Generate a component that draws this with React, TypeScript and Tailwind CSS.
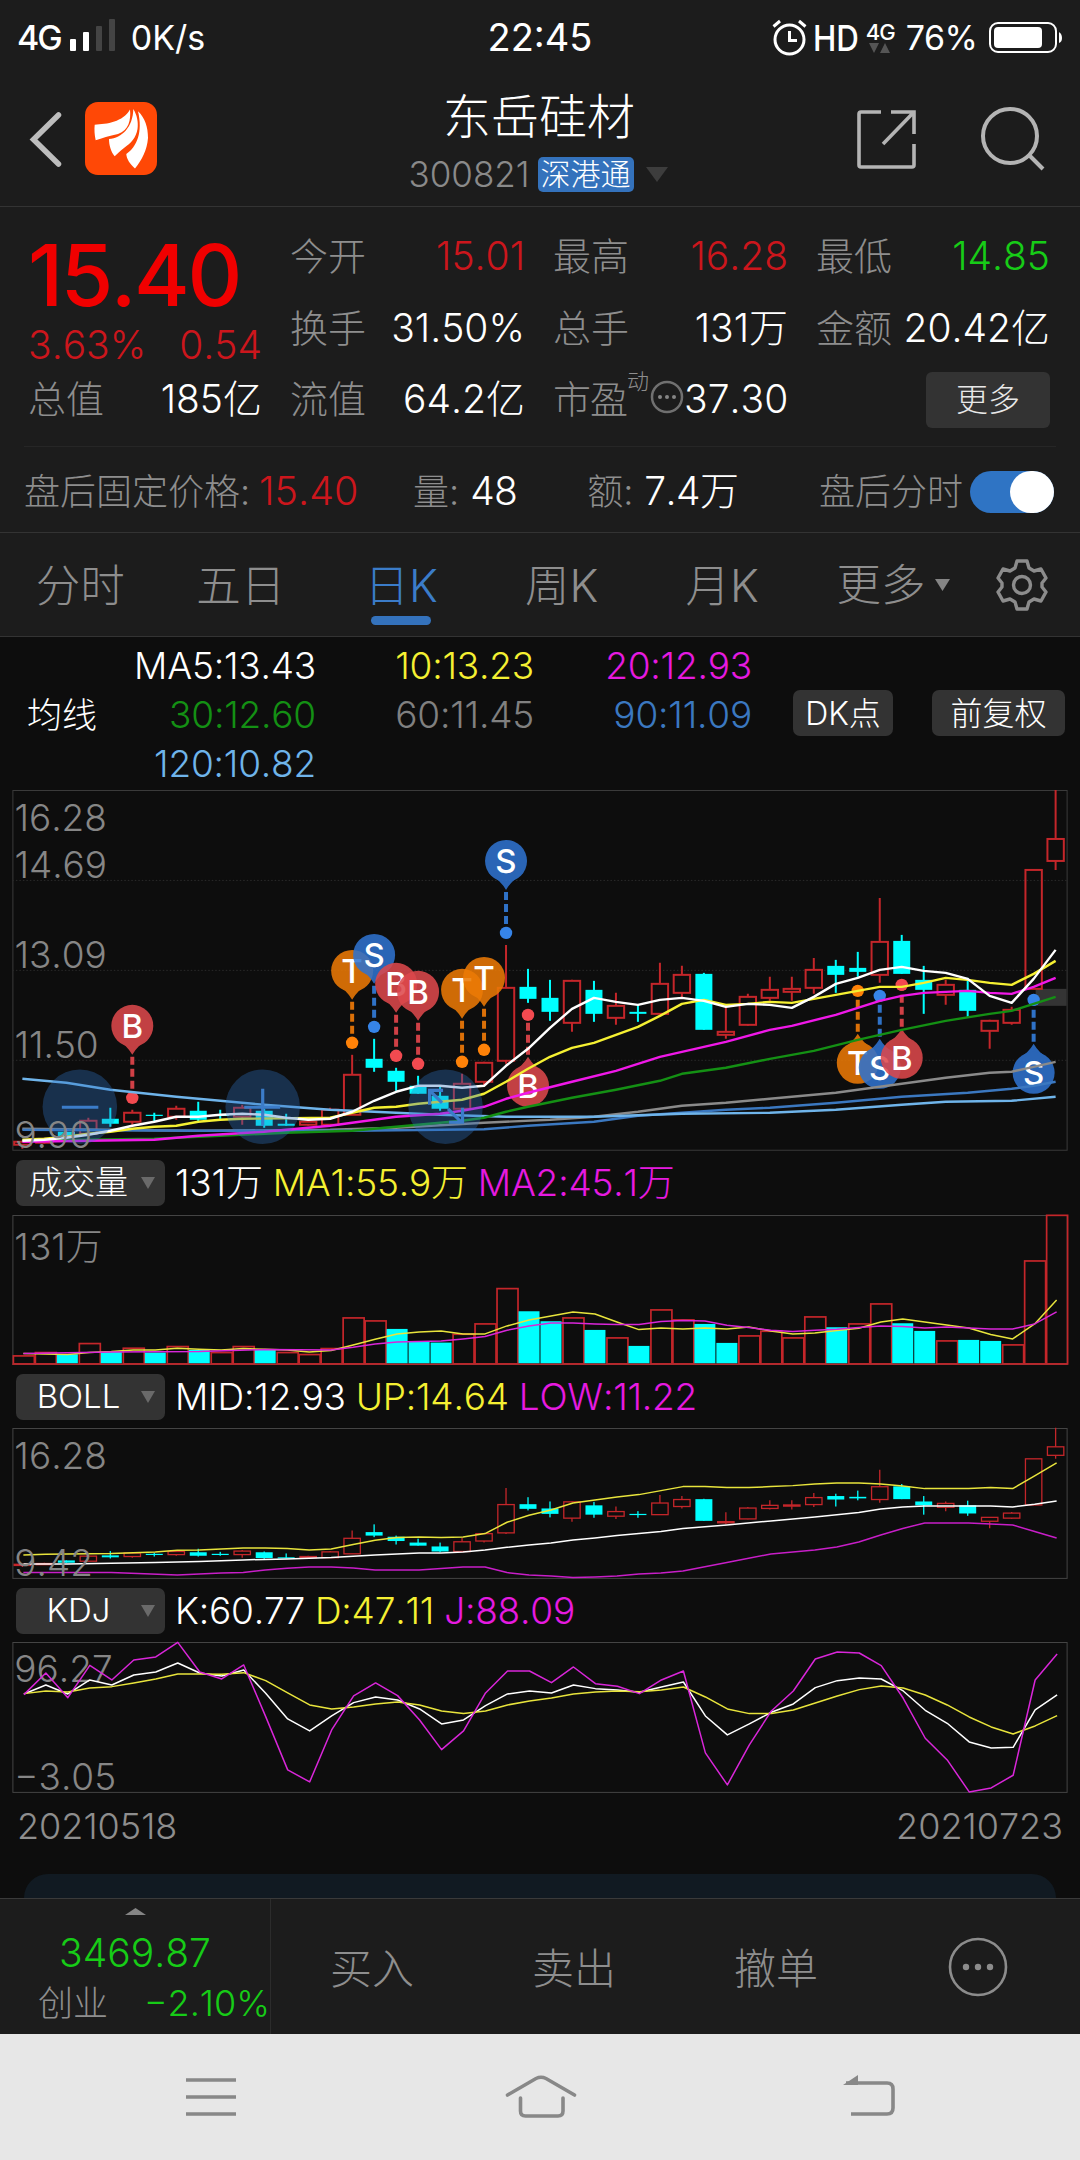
import React from 'react';

type Candle = [up: 0 | 1, high: number, top: number, bottom: number, low: number];

const STEP = 22;

const candles: Candle[] = [
  [1, 1141, 1142, 1145, 1149],
  [1, 1138, 1140, 1143, 1144],
  [0, 1132, 1132, 1138, 1138],
  [1, 1118, 1121, 1134, 1135],
  [0, 1108, 1119, 1124, 1127],
  [1, 1110, 1113, 1122, 1125],
  [0, 1113, 1115, 1116, 1122],
  [1, 1106, 1109, 1117, 1120],
  [0, 1102, 1111, 1120, 1122],
  [0, 1110, 1115, 1116, 1120],
  [1, 1105, 1108, 1117, 1125],
  [0, 1109, 1111, 1126, 1128],
  [0, 1114, 1124, 1126, 1126],
  [1, 1120, 1122, 1125, 1126],
  [1, 1108, 1110, 1125, 1126],
  [1, 1055, 1075, 1115, 1115],
  [0, 1039, 1059, 1068, 1072],
  [0, 1068, 1071, 1082, 1091],
  [0, 1076, 1086, 1094, 1094],
  [0, 1086, 1096, 1109, 1111],
  [1, 1074, 1084, 1109, 1110],
  [1, 1062, 1063, 1082, 1086],
  [1, 945, 988, 1061, 1064],
  [0, 969, 987, 999, 1003],
  [0, 980, 998, 1012, 1021],
  [1, 980, 981, 1023, 1032],
  [0, 981, 990, 1014, 1022],
  [1, 993, 1006, 1018, 1025],
  [0, 1005, 1012, 1014, 1022],
  [1, 963, 984, 1014, 1015],
  [1, 966, 975, 993, 998],
  [0, 973, 974, 1030, 1030],
  [1, 1008, 1032, 1035, 1039],
  [1, 994, 997, 1025, 1026],
  [1, 977, 990, 998, 1001],
  [1, 977, 989, 992, 1001],
  [1, 958, 970, 988, 994],
  [0, 960, 966, 975, 993],
  [0, 952, 968, 972, 977],
  [1, 898, 942, 975, 983],
  [0, 935, 941, 974, 974],
  [0, 966, 980, 990, 1014],
  [1, 980, 985, 995, 1005],
  [0, 978, 990, 1011, 1017],
  [1, 1020, 1021, 1031, 1049],
  [1, 1007, 1010, 1023, 1025],
  [1, 870, 870, 989, 989],
  [1, 790, 839, 861, 870],
];

const averages = [
  { color: '#8a8a8a', points: '0,1129 8,1131 14,1130 17,1128 21,1123 24,1120 26,1117 28,1112 30,1106 32,1103 34,1099 37,1093 40,1084 42,1078 44,1073 45,1072 46,1067 47,1062' },
  { color: '#3b78c0', points: '0,1130 8,1131 15,1131 21,1129.5 23,1126 26,1122 28,1116 30,1113 32,1110 34,1108 37,1103 40,1097 43,1093 45,1089 46,1086 47,1082' },
  { color: '#6fb4ea', points: '0,1079 2,1083 4,1090 7,1097 11,1105 14,1110 15,1111 19,1115 22,1117 26,1117 30,1114 34,1113 37,1110 40,1105 42,1102 45,1101 47,1097' },
  { color: '#149014', points: '0,1141 3,1140 6,1139 9,1136 12,1133 15,1131 18,1125 20,1121 21,1118 22,1112 23,1107 25,1098 27,1090 29,1081 30,1074 32,1068 34,1059 36,1051 38,1040 40,1030 42,1021 44,1014 45,1011 46,1004 47,997' },
  { color: '#f018e8', points: '0,1142 3,1141 6,1140 8,1136 11,1132 13,1128 14,1126 15,1123 17,1117 19,1114 20,1111 21,1107 22,1099 23,1093 25,1082 27,1071 29,1057 31,1047 32,1042 34,1030 35,1026 37,1015 39,1001 40,996 41,993 42,992 43,991 44,993 45,994 46,987 47,978' },
  { color: '#f5f032', points: '0,1140 1,1139 2,1137 3,1134 4,1132 5,1129 6,1127 7,1126 8,1122 9,1120 10,1119 14,1118 15,1113 16,1108 17,1107 18,1104 19,1102 20,1100 21,1094 22,1082 23,1069 24,1057 25,1048 26,1043 27,1035 28,1027 29,1016 30,1004 31,1000 32,1005 33,1004 34,1002 35,1003 36,999 37,995 38,991 39,987 40,987 41,983 42,978 43,980 44,983 45,985 46,974 47,961' },
  { color: '#ffffff', points: '0,1141 1,1140 2,1138 3,1135 4,1131 5,1126 6,1122 7,1117 8,1117 9,1115 10,1114 11,1115 12,1118 13,1120 14,1119 15,1112 16,1101 17,1092 18,1086 19,1086 20,1088 21,1086 22,1066 23,1049 24,1028 25,1009 26,998 27,1002 28,1005 29,1000 30,998 31,1001 32,1007 33,1004 34,1005 35,1008 36,997 37,984 38,978 39,970 40,967 41,971 42,973 43,979 44,996 45,1003 46,979 47,950' },
];

const pinColors = { B: '#f24a50', S: '#3684e8', T: '#ff8208' };
const pinFills = { B: '#dd484c', S: '#2f73d0', T: '#ec7a05' };

const pins: { x: number; label: 'B' | 'S' | 'T'; y: number; dot: number }[] = [
  { x: 132, label: 'B', y: 1026, dot: 1098 },
  { x: 352, label: 'T', y: 971, dot: 1043 },
  { x: 374, label: 'S', y: 955, dot: 1027 },
  { x: 396, label: 'B', y: 984, dot: 1056 },
  { x: 418, label: 'B', y: 992, dot: 1064 },
  { x: 462, label: 'T', y: 990, dot: 1062 },
  { x: 484, label: 'T', y: 978, dot: 1050 },
  { x: 506, label: 'S', y: 861, dot: 933 },
  { x: 528, label: 'B', y: 1086, dot: 1015 },
  { x: 858, label: 'T', y: 1063, dot: 991 },
  { x: 880, label: 'S', y: 1068, dot: 996 },
  { x: 902, label: 'B', y: 1058, dot: 985 },
  { x: 1034, label: 'S', y: 1073, dot: 1000 },
];

// bar tops in thirds of a pixel, 'c' marks a falling day
const volumes =
  '615 605 610c 578 603c 592 605c 587 597c 605 587 597c 605 611 593 501 510 534c 573c 575c 550 519 413 481c 511c 501 537c 561 585c 477 507 519c 576c 555 541 561 498 529c 519 459 517c 540c 570 567c 570c 582 330 193'.split(' ');

const volumeLines = [
  { color: '#e8e43c', points: '0,608 1,609 2,611 3,605 4,602 5,597 6,597 7,592 8,595 9,597 10,593 11,595 12,597 13,603 14,599 15,582 16,565 17,549 18,543 19,540 20,549 21,549 22,525 23,507 24,495 25,483 26,489 27,513 28,536 29,531 30,534 31,531 32,534 33,528 34,540 35,549 36,546 37,539 38,532 39,513 40,504 41,513 42,522 43,531 44,551 45,564 46,519 47,447' },
  { color: '#d926d9', points: '0,608 4,603 8,602 11,596 14,597 15,589 16,579 17,573 18,572 19,570 20,564 21,557 22,538 23,525 24,516 25,516 26,519 27,521 28,521 29,512 30,509 31,510 32,523 33,530 34,538 35,542 36,538 37,535 38,530 39,525 40,527 41,531 42,528 43,531 44,534 45,534 46,519 47,483' },
];

const bollLines = [
  { color: '#e8e43c', points: '0,555 1,553 4,551 6,546 7,541 8,540 9,537 10,534 11,534 12,536 13,540 14,537 15,524 16,511 17,503 18,501 19,503 20,501 21,491 22,457 23,436 24,420 25,399 26,390 27,381 28,374 29,362 30,350 31,350 32,353 33,353 34,350 35,347 36,342 37,339 38,339 39,342 40,348 41,356 43,356 44,353 45,356 46,318 47,279' },
  { color: '#ffffff', points: '0,582 2,582 6,578 8,575 10,570 12,567 14,563 15,559 16,555 18,549 19,549 20,546 21,540 22,532 23,525 24,519 25,510 26,504 27,497 28,491 29,485 30,476 32,465 34,453 36,441 38,428 39,417 40,411 41,408 44,408 45,411 46,403 47,393' },
  { color: '#c81ec8', points: '0,608 4,608 7,615 9,609 10,608 11,600 12,595 13,591 14,591 15,594 16,600 18,600 20,591 21,591 22,608 23,615 24,618 25,623 26,621 27,618 28,612 29,609 30,603 32,578 34,552 36,540 37,531 38,516 39,495 40,476 41,459 43,459 45,465 46,485 47,504' },
];

const kdjLines = [
  { color: '#ffffff', points: '0,327 1,300 2,327 3,285 4,300 5,270 6,261 7,234 8,264 9,273 10,255 11,325 12,402 13,438 14,393 15,353 16,336 17,345 18,372 19,417 20,405 21,362 22,327 23,318 24,324 25,300 26,311 27,315 28,322 29,306 30,291 31,393 32,450 33,417 34,382 35,357 36,308 37,287 38,279 39,282 40,318 41,376 42,415 43,471 44,489 45,487 46,375 47,330' },
  { color: '#e8e43c', points: '0,326 1,318 2,321 3,309 4,305 5,294 6,282 7,267 8,267 9,268 10,263 11,287 12,324 13,360 14,372 15,366 16,357 17,351 18,360 19,378 20,386 21,378 22,360 23,348 24,339 25,327 26,321 27,318 28,320 29,315 30,306 31,336 32,372 33,386 34,386 35,375 36,354 37,333 38,314 39,303 40,309 41,330 42,360 43,396 44,426 45,447 46,423 47,392' },
  { color: '#d926d9', points: '0,329 1,264 2,338 3,241 4,285 5,225 6,216 7,172 8,261 9,282 10,240 11,395 12,555 13,591 14,435 15,333 16,294 17,332 18,405 19,494 20,438 21,324 22,258 23,258 24,293 25,246 26,296 27,304 28,326 29,285 30,258 31,504 32,600 33,480 34,378 35,318 36,222 37,201 38,204 39,242 40,340 41,460 42,525 43,621 44,609 45,571 46,285 47,207' },
];

function Lines({
  series,
  width,
  scaleY,
  offsetX = 22,
}: {
  series: { color: string; points: string }[];
  width: number;
  scaleY: number;
  offsetX?: number;
}) {
  return (
    <g transform={`translate(${offsetX} 0) scale(${STEP} ${scaleY})`}>
      {series.map((s) => (
        <polyline
          key={s.color}
          points={s.points}
          fill="none"
          stroke={s.color}
          strokeWidth={width}
          strokeLinejoin="round"
          vectorEffect="non-scaling-stroke"
        />
      ))}
    </g>
  );
}

function Candles({ mapY, stroke }: { mapY: (y: number) => number; stroke: number }) {
  return (
    <>
      {candles.map(([up, high, top, bottom, low], i) => {
        const x = 22 + i * STEP;
        const [h, t, b, l] = [high, top, bottom, low].map(mapY);
        if (!up) {
          return (
            <g key={i} fill="#00ffff">
              <rect x={x - stroke / 2} y={h} width={stroke} height={l - h} />
              <rect x={x - 8.5} y={t} width={17} height={Math.max(b - t, 1.2)} />
            </g>
          );
        }
        return (
          <g key={i} fill="none" stroke="#c4262a" strokeWidth={stroke}>
            <path d={`M${x} ${h}V${t}M${x} ${b}V${l}`} />
            <rect x={x - 8.2} y={t} width={16.4} height={Math.max(b - t, 1)} />
          </g>
        );
      })}
    </>
  );
}

function Pin({ x, label, y, dot }: { x: number; label: 'B' | 'S' | 'T'; y: number; dot: number }) {
  const dir = dot > y ? 1 : -1;
  return (
    <g>
      <path d={`M${x} ${y + dir * 31}V${dot}`} stroke={pinColors[label]} strokeWidth={4} strokeDasharray="8 4" opacity={0.85} />
      <circle cx={x} cy={dot} r={6.2} fill={pinColors[label]} />
      <g opacity={0.87}>
        <path
          d={`M${x - 17} ${y + dir * 12}Q${x - 5} ${y + dir * 20} ${x} ${y + dir * 29}Q${x + 5} ${y + dir * 20} ${x + 17} ${y + dir * 12}Z`}
          fill={pinFills[label]}
        />
        <circle cx={x} cy={y} r={21} fill={pinFills[label]} />
      </g>
      <text x={x} y={y + 12} textAnchor="middle" fontSize={33} fontWeight={450} fill="#fff">
        {label}
      </text>
    </g>
  );
}

function AxisLabel({ y, children, x = 14 }: { y: number; x?: number; children: string }) {
  return (
    <text x={x} y={y} fontSize={37} fill="#868686">
      {children}
    </text>
  );
}

function MainChart() {
  return (
    <svg width={1080} height={362} viewBox="0 790 1080 362" className="block">
      <rect x={12.5} y={790.5} width={1055} height={360} fill="none" stroke="#3a3a3a" />
      {[880.5, 970.5, 1060.5].map((y) => (
        <path key={y} d={`M12 ${y}H1067`} stroke="#2a2a2a" strokeDasharray="1.5 2" />
      ))}
      <rect x={1036} y={989} width={31} height={17} fill="#343434" />
      <Candles mapY={(y) => y} stroke={2} />
      {pins.map((pin) => (
        <Pin key={pin.x} {...pin} />
      ))}
      <Lines series={averages} width={2.4} scaleY={1} />
      <g fill="#2f74c4" fillOpacity={0.35}>
        <circle cx={79.5} cy={1107} r={37.3} />
        <circle cx={262.5} cy={1107} r={37.3} />
        <circle cx={445.5} cy={1107} r={37.3} />
      </g>
      <g fill="none" stroke="#3b7cc9" strokeWidth={3.2}>
        <path d="M61.5 1107.500H98" />
        <path d="M244 1107.500H280M262.500 1089V1126" />
        <path d="M429.500 1105V1090.500H443M430 1091L442 1103M448 1109L461 1122M462.500 1108V1122.500H449" />
      </g>
      <AxisLabel y={831}>16.28</AxisLabel>
      <AxisLabel y={878}>14.69</AxisLabel>
      <AxisLabel y={968}>13.09</AxisLabel>
      <AxisLabel y={1058}>11.50</AxisLabel>
      <AxisLabel y={1148}>9.90</AxisLabel>
    </svg>
  );
}

function VolumeChart() {
  return (
    <svg width={1080} height={152} viewBox="0 1213 1080 152" className="block">
      <rect x={12.5} y={1214.5} width={1055} height={149} fill="none" stroke="#444" />
      {volumes.map((v, i) => {
        const top = 1150 + parseInt(v, 10) / 3;
        const x = 12.5 + i * STEP;
        return v.endsWith('c') ? (
          <rect key={i} x={x} y={top} width={21} height={1362.5 - top} fill="#00ffff" />
        ) : (
          <rect key={i} x={x + 0.5} y={top} width={21} height={1363 - top} fill="none" stroke="#c4262a" strokeWidth={1.7} />
        );
      })}
      <path d="M12 1363.500H1068" stroke="#b02a2e" strokeWidth={2} />
      <g transform="translate(0 1150)">
        <Lines series={volumeLines} width={1.5} scaleY={1 / 3} offsetX={23} />
      </g>
      <AxisLabel y={1259}>131万</AxisLabel>
    </svg>
  );
}

function BollChart() {
  return (
    <svg width={1080} height={152} viewBox="0 1427 1080 152" className="block">
      <rect x={12.5} y={1428.5} width={1055} height={150} fill="none" stroke="#444" />
      <Candles mapY={(y) => 1428 + (y - 790.5) * 0.388} stroke={1.3} />
      <g transform="translate(0 1370)">
        <Lines series={bollLines} width={1.5} scaleY={1 / 3} offsetX={23} />
      </g>
      <AxisLabel y={1469}>16.28</AxisLabel>
      <AxisLabel y={1576}>9.42</AxisLabel>
    </svg>
  );
}

function KdjChart() {
  return (
    <svg width={1080} height={152} viewBox="0 1641 1080 152" className="block">
      <rect x={12.5} y={1642.5} width={1055} height={150} fill="none" stroke="#444" />
      <AxisLabel y={1682}>96.27</AxisLabel>
      <AxisLabel y={1790}>−3.05</AxisLabel>
      <g transform="translate(0 1585)">
        <Lines series={kdjLines} width={1.5} scaleY={1 / 3} offsetX={23.5} />
      </g>
    </svg>
  );
}

function StatusBar() {
  return (
    <div className="flex h-[75px] items-center justify-between pl-[17px] pr-[17px] text-white">
      <div className="flex w-[400px] items-center text-[34px]">
        <span className="font-medium tracking-[-2px]">4G</span>
        <svg width={46} height={33} viewBox="0 0 46 33" className="ml-[9px] -mt-[5px]">
          <rect x={0} y={20} width={6} height={12} rx={1} fill="#fff" />
          <rect x={13} y={13} width={6} height={19} rx={1} fill="#fff" />
          <rect x={26} y={7} width={6} height={25} rx={1} fill="#444" />
          <rect x={39} y={0} width={6} height={32} rx={1} fill="#444" />
        </svg>
        <span className="ml-[15px] font-normal">0K/s</span>
      </div>
      <span className="text-[38px] font-normal">22:45</span>
      <div className="flex w-[400px] items-center justify-end">
        <svg width={35} height={38} viewBox="0 0 35 38" fill="none" stroke="#fff" strokeWidth={3}>
          <circle cx={17.500} cy={20.500} r={14.500} />
          <path d="M17.500 12V21.500H25M1.500 7.500L8 2M33.500 7.500L27 2" />
        </svg>
        <span className="-mr-[8px] ml-[6px] origin-left scale-x-[0.87] text-[36px] font-medium">HD</span>
        <div className="ml-[8px] flex flex-col items-center">
          <span className="text-[22px] leading-[22px] font-medium tracking-[-1px]">4G</span>
          <svg width={22} height={11} viewBox="0 0 22 11" fill="#555">
            <path d="M0 0H10L5 10ZM11 10H21L16 0Z" />
          </svg>
        </div>
        <span className="ml-[11px] text-[34px] font-normal tracking-[-0.8px]">76%</span>
        <svg width={74} height={32} viewBox="0 0 74 32" className="ml-[12px]">
          <rect x={1} y={1} width={66} height={29} rx={8} fill="none" stroke="#fff" strokeWidth={2} />
          <rect x={5} y={5} width={48} height={21} rx={4} fill="#fff" />
          <path d="M70 10Q73 12 73 16T70 21Z" fill="#fff" />
        </svg>
      </div>
    </div>
  );
}

function Header() {
  return (
    <div className="flex h-[132px] items-start border-b border-[#333] px-[28px]">
      <div className="flex w-[300px] items-center pt-[27px]">
        <svg width={34} height={56} viewBox="0 0 34 56" fill="none" stroke="#bdbdbd" strokeWidth={5.500} strokeLinecap="round">
          <path d="M30.500 4L5.500 28.500L30.500 53" />
        </svg>
        <svg width={72} height={73} viewBox="0 0 72 73" className="ml-[23px]">
          <rect width={72} height={73} rx={13} fill="#ff4806" />
          <g fill="#fff">
            <path d="M9.700 22.700C22 22 38 20 45 7.500C46 18 44 28 33 32C24 34 17 36 10.700 38.300C9.500 33 9.200 27 9.700 22.700Z" />
            <path d="M48.300 7C52 13 53.500 20 52.500 27C51 36 46 41 39 46C35 49 32 52 29.700 54.300C26 50 24 43 24 37C37 36 48 25 48.300 7Z" />
            <path d="M53 9.300C60 16 63 25 63 36C62 48 57 58 50 66.500C45 62 41.500 57 41.300 52C52 45 58 30 53 9.300Z" />
          </g>
        </svg>
      </div>
      <div className="flex flex-1 flex-col items-center pt-[13px]">
        <h1 className="pr-[2px] text-[48px] leading-[58px] text-white">东岳硅材</h1>
        <div className="flex h-[56px] items-center pr-[4px]">
          <span className="text-[35px] text-[#8a8a8a]">300821</span>
          <span className="ml-[8px] flex h-[35px] w-[96px] items-center justify-center rounded-[5px] bg-[#3472bc] text-[30px] text-white">
            深港通
          </span>
          <svg width={22} height={15} viewBox="0 0 22 15" className="ml-[12px]">
            <path d="M0 0H22L11 15Z" fill="#3d3d3d" />
          </svg>
        </div>
      </div>
      <div className="flex w-[300px] items-center justify-end gap-[62px] pt-[31px] pr-[6px]">
        <svg width={62} height={64} viewBox="0 0 62 64" fill="none" stroke="#b4b4b4" strokeWidth={3.600}>
          <path d="M25 5H5Q3 5 3 7V58Q3 60 5 60H56Q58 60 58 58V37M35 5H58V27M58 5L27 37" />
        </svg>
        <svg width={66} height={66} viewBox="0 0 66 66" fill="none" stroke="#b4b4b4" strokeWidth={4}>
          <circle cx={30} cy={30} r={27} />
          <path d="M49 49L63 63" />
        </svg>
      </div>
    </div>
  );
}

function Stat({ label, value, tone = 'text-white' }: { label: string; value: string; tone?: string }) {
  return (
    <div className="flex items-center justify-between whitespace-nowrap">
      <span className="text-[#8e8e8e]">{label}</span>
      <span className={`text-[39px] ${tone}`}>{value}</span>
    </div>
  );
}

function QuotePanel() {
  return (
    <div className="h-[326px] border-b border-[#333] pt-[14px]">
      <div className="grid grid-cols-[234px_235px_235px_234px] grid-rows-[71px_72px_71px] gap-x-[28px] pl-[28px] text-[38px]">
        <div className="row-span-2 flex flex-col text-[#cc161c]">
          <div className="mt-[10px] h-[90px] text-[85px] leading-[90px] font-medium tracking-[-2.500px] text-[#f00000]">15.40</div>
          <div className="flex justify-between text-[39px] leading-[48px]">
            <span>3.63%</span>
            <span>0.54</span>
          </div>
        </div>
        <Stat label="今开" value="15.01" tone="text-[#cc161c]" />
        <Stat label="最高" value="16.28" tone="text-[#cc161c]" />
        <Stat label="最低" value="14.85" tone="text-[#17cc17]" />
        <Stat label="换手" value="31.50%" />
        <Stat label="总手" value="131万" />
        <Stat label="金额" value="20.42亿" />
        <Stat label="总值" value="185亿" />
        <Stat label="流值" value="64.2亿" />
        <div className="flex items-center whitespace-nowrap text-[#8e8e8e]">
          <span className="tracking-[-1px]">市盈</span>
          <span className="-mt-[36px] text-[22px]">动</span>
          <svg width={34} height={34} viewBox="0 0 34 34" className="-mt-[5px] ml-[1px] shrink-0">
            <circle cx={17} cy={17} r={15} fill="none" stroke="#707070" strokeWidth={2.500} />
            <g fill="#858585">
              <circle cx={10} cy={17} r={2} />
              <circle cx={17} cy={17} r={2} />
              <circle cx={24} cy={17} r={2} />
            </g>
          </svg>
          <span className="ml-auto text-[39px] text-white">37.30</span>
        </div>
        <div className="flex items-center justify-end">
          <button className="h-[56px] w-[124px] rounded-[6px] bg-[#333] text-[32px] text-[#e8e8e8]">更多</button>
        </div>
      </div>
      <div className="mx-[24px] mt-[11px] border-t border-[#262626]" />
      <div className="flex h-[89px] items-center pl-[24px] pr-[26px] text-[36px] whitespace-nowrap text-[#8e8e8e]">
        <span className="w-[235px]">盘后固定价格:</span>
        <span className="w-[154px] text-[39.500px] text-[#cc161c]">15.40</span>
        <span>量:</span>
        <span className="ml-[11px] w-[117px] text-[39px] tracking-[-0.6px] text-white">48</span>
        <span>额:</span>
        <span className="ml-[11px] text-[39px] tracking-[-0.6px] text-white">7.4万</span>
        <span className="ml-auto">盘后分时</span>
        <div className="ml-[7px] flex h-[42px] w-[84px] justify-end rounded-full bg-[#2f74c4]">
          <div className="h-[42px] w-[44px] rounded-full bg-white" />
        </div>
      </div>
    </div>
  );
}

const tabs = ['分时', '五日', '日K', '周K', '月K'];

function Tabs() {
  return (
    <div className="flex h-[104px] border-b border-[#333] text-[44.500px] text-[#8e8e8e]">
      {tabs.map((tab) => (
        <div key={tab} className="flex w-[160.500px] flex-col items-center">
          <span className={tab === '日K' ? 'h-[83px] leading-[107px] text-[#3b7cc9]' : 'h-[83px] leading-[107px]'}>{tab}</span>
          {tab === '日K' && <div className="h-[9px] w-[60px] rounded-full bg-[#3472bc]" />}
        </div>
      ))}
      <div className="ml-[34px] flex items-center leading-[106px]">
        <span>更多</span>
        <svg width={15} height={12} viewBox="0 0 15 12" className="ml-[9px]">
          <path d="M0 0H15L7.500 12Z" fill="#858585" />
        </svg>
        <svg width={52} height={54} viewBox="0 0 52 54" className="ml-[46px]" fill="none" stroke="#8c8c8c" strokeWidth={3.400} strokeLinejoin="round">
          <path d="M21 3H31L33 10L38 13L45 11L50 20L46 25V29L50 34L45 43L38 41L33 44L31 51H21L19 44L14 41L7 43L2 34L6 29V25L2 20L7 11L14 13L19 10Z" />
          <circle cx={26} cy={27} r={8.500} />
        </svg>
      </div>
    </div>
  );
}

function AverageLegend() {
  return (
    <div className="flex h-[153px] pt-[4px] text-[37px]">
      <div className="flex w-[97px] items-center pl-[27px] text-[35px] whitespace-nowrap text-white">均线</div>
      <div className="grid grid-cols-[219px_218px_218px] grid-rows-[49px_49px_49px] text-right leading-[49px] tracking-[-0.2px]">
        <span className="text-white">MA5:13.43</span>
        <span className="text-[#f5f032]">10:13.23</span>
        <span className="text-[#e61ae0]">20:12.93</span>
        <span className="text-[#149014]">30:12.60</span>
        <span className="text-[#808080]">60:11.45</span>
        <span className="text-[#3b78c0]">90:11.09</span>
        <span className="text-[#6fb4ea]">120:10.82</span>
      </div>
      <div className="flex items-center pb-1 text-[32px] text-white">
        <button className="ml-[41px] h-[46px] w-[100px] rounded-[7px] bg-[#333]">DK点</button>
        <button className="ml-[39px] h-[46px] w-[133px] rounded-[7px] bg-[#333]">前复权</button>
      </div>
    </div>
  );
}

function IndicatorRow({ name, values }: { name: string; values: string[] }) {
  const tones = ['text-white', 'text-[#f5f032]', 'text-[#e61ae0]'];
  return (
    <div className="flex h-[62px] items-center pt-[1px] pl-[16px] text-[37px] whitespace-nowrap">
      <button className="mr-[10px] flex h-[46px] w-[149px] items-center rounded-[7px] bg-[#333] text-[33px] text-white">
        <span className="flex-1 text-center">{name}</span>
        <svg width={14} height={12} viewBox="0 0 14 12" className="mr-[10px]">
          <path d="M0 0H14L7 12Z" fill="#6a6a6a" />
        </svg>
      </button>
      {values.map((value, i) => (
        <span key={value} className={`mr-[10px] tracking-[-0.2px] ${tones[i]}`}>
          {value}
        </span>
      ))}
    </div>
  );
}

function BottomBar() {
  return (
    <div className="flex h-[136px] border-t border-[#3a3a3a] bg-[#1c1c1c] text-[#8e8e8e]">
      <div className="flex w-[271px] flex-col items-center border-r border-[#2c2c2c]">
        <svg width={21} height={7} viewBox="0 0 21 7" className="mt-[9px]">
          <path d="M0 7L10.500 0L21 7Z" fill="#858585" />
        </svg>
        <div className="mt-[14px] text-[39px] leading-[48px] text-[#17cc17]">3469.87</div>
        <div className="flex w-full justify-between pl-[38px] text-[35px] leading-[52px] whitespace-nowrap">
          <span>创业</span>
          <span className="text-[36px] text-[#17cc17]">−2.10%</span>
        </div>
      </div>
      <div className="flex flex-1 items-center text-[42px]">
        <span className="w-[202px] pt-[3px] text-center">买入</span>
        <span className="w-[202px] pt-[3px] text-center">卖出</span>
        <span className="w-[202px] pt-[3px] text-center">撤单</span>
        <svg width={62} height={62} viewBox="0 0 62 62" className="ml-[70px]" fill="#8c8c8c">
          <circle cx={31} cy={31} r={28} fill="none" stroke="#8c8c8c" strokeWidth={2.600} />
          <circle cx={19} cy={31} r={3.200} />
          <circle cx={31} cy={31} r={3.200} />
          <circle cx={43} cy={31} r={3.200} />
        </svg>
      </div>
    </div>
  );
}

function SystemNav() {
  return (
    <div className="flex h-[126px] bg-[#e7e7e7]">
      <svg width={1080} height={126} viewBox="0 2034 1080 126" fill="none" stroke="#888" strokeWidth={3.600}>
        <path d="M186 2080H236M186 2097H236M186 2114H236" />
        <path d="M507.500 2095L536 2078.500Q541 2076 546 2078.500L574.500 2095M520.500 2098V2111Q520.500 2116 525.500 2116H558Q563 2116 563 2111V2098" strokeLinecap="round" />
        <path d="M846 2083H887Q893 2083 893 2089V2108Q893 2114 887 2114H851" />
        <path d="M843 2085L858 2075V2085Z" fill="#888" stroke="none" />
      </svg>
    </div>
  );
}

export default function App() {
  return (
    <div className="flex h-[2160px] w-[1080px] flex-col overflow-hidden bg-[#0d0d0d] font-['Inter','Noto_Sans_CJK_SC',sans-serif] font-light [font-kerning:none]">
      <div className="bg-[#1c1c1c]">
        <StatusBar />
        <Header />
        <QuotePanel />
        <Tabs />
      </div>
      <AverageLegend />
      <MainChart />
      <IndicatorRow name="成交量" values={['131万', 'MA1:55.9万', 'MA2:45.1万']} />
      <VolumeChart />
      <IndicatorRow name="BOLL" values={['MID:12.93', 'UP:14.64', 'LOW:11.22']} />
      <BollChart />
      <IndicatorRow name="KDJ" values={['K:60.77', 'D:47.11', 'J:88.09']} />
      <KdjChart />
      <div className="flex h-[81px] justify-between px-[17px] pt-[8px] text-[36px] leading-[50px] text-[#8e8e8e]">
        <span>20210518</span>
        <span>20210723</span>
      </div>
      <div className="mx-[24px] h-[24px] rounded-t-[36px] bg-[#111a22]" />
      <BottomBar />
      <SystemNav />
    </div>
  );
}
